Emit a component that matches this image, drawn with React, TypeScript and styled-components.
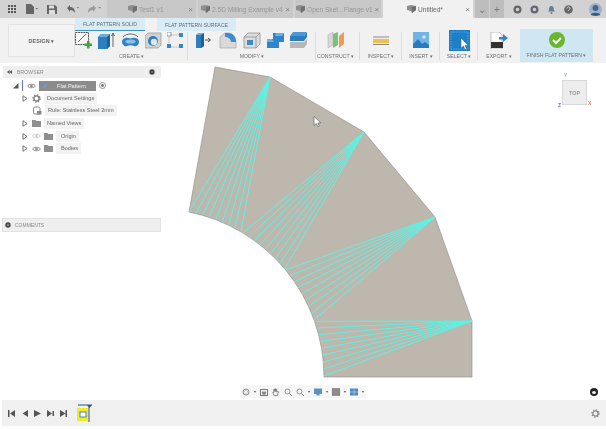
import React from "react";
import styled, { createGlobalStyle } from "styled-components";

const Global = createGlobalStyle`
  html, body { margin: 0; padding: 0; background: #fff; }
  body { font-family: "Liberation Sans", Arial, sans-serif; overflow: hidden; }
`;

const Page = styled.div`
  width: 606px; height: 429px; display: flex; flex-direction: column;
  overflow: hidden; background: #fff; filter: blur(0.42px); color: #666;
`;

/* ---------- title bar ---------- */
const TabBar = styled.div`
  height: 18px; flex: none; display: flex; align-items: center; background: #d2d2d2;
`;
const QuickTools = styled.div`
  width: 107px; flex: none; display: flex; align-items: center; gap: 9px; padding-left: 8px; box-sizing: border-box;
`;
const DocTab = styled.div<{ $w: number; $pad: number; $active?: boolean }>`
  width: ${p => p.$w}px; height: 18px; flex: none; margin-right: 2px; box-sizing: border-box;
  display: flex; align-items: center; gap: 2px; padding: 0 3px 0 ${p => p.$pad}px;
  background: ${p => (p.$active ? "#f1f1f1" : "#c8c8c8")};
  color: ${p => (p.$active ? "#666" : "#979797")}; font-size: 6.6px; white-space: nowrap;
`;
const TabClose = styled.span`
  font-size: 8px; color: #808080; margin-left: auto;
`;
const WindowTools = styled.div`
  display: flex; align-items: center; flex: 1; height: 18px;
`;
const WinSquare = styled.div`
  width: 14px; height: 18px; display: flex; align-items: center; justify-content: center;
  background: #bdbdbd; margin-right: 1px; color: #777; font-size: 10px;
`;
const WinIcons = styled.div`
  display: flex; align-items: center; gap: 8px; padding-left: 8px;
`;
const AvatarSlot = styled.div`
  margin-left: 8px; display: flex;
`;

/* ---------- ribbon ---------- */
const Ribbon = styled.div`
  height: 45px; flex: none; display: flex; background: #f1f1f1; padding-left: 8px; box-sizing: border-box; position: relative;
`;
const DesignButton = styled.div`
  width: 67px; height: 33px; margin-top: 6px; box-sizing: border-box; border: 1px solid #e2e2e2; background: #f3f3f3;
  display: flex; align-items: center; justify-content: center; font-size: 5.4px; font-weight: 700; color: #666; letter-spacing: .1px;
`;
const SubTabs = styled.div`
  height: 13px; display: flex; position: absolute; left: 75px; top: 0;
`;
const SubTab = styled.div<{ $w: number; $ml?: number; $active?: boolean }>`
  width: ${p => p.$w}px; margin-left: ${p => p.$ml || 0}px; height: 13px; box-sizing: border-box; background: #d9ecf6;
  border-bottom: ${p => (p.$active ? "1.5px solid #3c92c8" : "none")};
  display: flex; align-items: center; justify-content: center; font-size: 5.2px; color: #667; white-space: nowrap;
`;
const Groups = styled.div`
  flex: 1; display: flex; height: 45px; align-items: flex-start;
`;
const Group = styled.div<{ $w: number; $line?: boolean; $fill?: boolean; $pr?: number }>`
  width: ${p => p.$w}px; flex: none; display: flex; flex-direction: column; align-items: center; box-sizing: border-box;
  justify-content: flex-end; position: relative; background: ${p => (p.$fill ? "#cfe7f3" : "transparent")};
  margin-top: ${p => (p.$fill ? "11px" : 0)}; height: ${p => (p.$fill ? "33px" : "45px")};
  padding-right: ${p => p.$pr ?? 0}px;
  &::after {
    content: ""; display: ${p => (p.$line ? "block" : "none")}; position: absolute; right: 0; top: 14px; bottom: 3px; width: 1px; background: #dcdcdc;
  }
`;
const GroupIcons = styled.div<{ $gap?: number; $left?: number }>`
  display: flex; align-items: center; align-self: ${p => (p.$left === undefined ? "center" : "flex-start")};
  justify-content: center; gap: ${p => p.$gap ?? 5}px; height: 22px; padding-left: ${p => p.$left ?? 0}px;
`;
const GroupLabel = styled.div`
  font-size: 5.2px; color: #6e6e6e; height: 8px; line-height: 8px; margin-bottom: 3px; margin-top: 1px; white-space: nowrap;
`;

/* ---------- canvas ---------- */
const Canvas = styled.div`
  flex: none; height: 337px; position: relative; background: #fff;
`;
const Drawing = styled.svg`
  position: absolute; left: 0; top: 0; width: 606px; height: 337px;
`;
const BrowserPanel = styled.div`
  position: absolute; left: 3px; top: 3px; width: 158px;
`;
const PanelHeader = styled.div`
  height: 12px; background: #eeeeee; display: flex; align-items: center; padding: 0 4px; box-sizing: border-box;
  font-size: 5px; color: #8a8a8a; gap: 5px; letter-spacing: .15px;
`;
const HeaderEnd = styled.span`
  margin-left: auto; display: flex; padding-right: 2px;
`;
const Tree = styled.div`
  display: flex; flex-direction: column; margin-top: 1.5px;
`;
const TreeRow = styled.div<{ $indent: number }>`
  height: 12.6px; display: flex; align-items: center; gap: 3px; padding-left: ${p => p.$indent}px; font-size: 5.6px; color: #666; white-space: nowrap;
`;
const TreeLabel = styled.span<{ $pad?: number }>`
  background: #f2f2f2; height: 11px; line-height: 11px; padding: 0 3px 0 ${p => p.$pad ?? 3}px;
`;
const TriSlot = styled.span`
  display: flex; margin-right: 1px;
`;
const ActivePill = styled.div`
  width: 57px; height: 10px; background: #8b8b8b; color: #f5f5f5; font-size: 5.6px; display: flex; align-items: center; gap: 10px; padding-left: 3px; box-sizing: border-box;
`;
const ActiveBar = styled.span`
  width: 1px; height: 11px; background: #6a78c8; margin-right: 1px;
`;
const CommentsPanel = styled.div`
  position: absolute; left: 2px; top: 155px; width: 159px; height: 14px; box-sizing: border-box; background: #efefef; border: 1px solid #e2e2e2;
  display: flex; align-items: center; gap: 4px; padding-left: 2px; font-size: 5px; color: #8a8a8a;
`;
const ViewCube = styled.div`
  position: absolute; left: 562px; top: 17px; width: 25px; height: 25px; box-sizing: border-box; background: #ededed; border: 1px solid #d8d8d8;
  display: flex; align-items: center; justify-content: center; font-size: 5.5px; font-weight: 700; color: #9a9a9a;
`;
const Axis = styled.span<{ $c: string; $l: number; $t: number }>`
  position: absolute; left: ${p => p.$l}px; top: ${p => p.$t}px; font-size: 5px; color: ${p => p.$c};
`;
const NavBar = styled.div`
  position: absolute; left: 240px; top: 322px; height: 13px; display: flex; align-items: center; gap: 4px; background: #f6f6f6; padding: 0 2px;
`;
const Caret = styled.span`
  width: 0; height: 0; border-left: 1.5px solid transparent; border-right: 1.5px solid transparent; border-top: 2px solid #555;
`;
const CornerBadge = styled.div`
  position: absolute; left: 590px; top: 325px; width: 8px; height: 8px; border-radius: 50%; background: #222;
`;
const CornerDot = styled.div`
  width: 4px; height: 3px; margin: 2.5px 2px; background: #eee; border-radius: 50%;
`;

/* ---------- timeline ---------- */
const Timeline = styled.div`
  height: 26px; flex: none; margin-left: 2px; background: #f0f0f0; display: flex; align-items: center; padding: 0 6px; box-sizing: border-box; gap: 6px; position: relative;
`;
const TimelineGear = styled.div`
  margin-left: auto; display: flex;
`;
const FeatureIcon = styled.div`
  margin-left: 4px; display: flex;
`;

/* ---------- icons ---------- */
const Svg: React.FC<{ w: number; h?: number; vb?: string; children: React.ReactNode }> = ({ w, h, vb, children }) => (
  <svg width={w} height={h ?? w} viewBox={vb ?? `0 0 ${w} ${h ?? w}`} style={{ flex: "none", display: "block" }}>{children}</svg>
);
const GridIcon = () => (
  <Svg w={8}>{[0, 3, 6].flatMap(x => [0, 3, 6].map(y => <rect key={`${x}${y}`} x={x} y={y} width={2} height={2} fill="#555" />))}</Svg>
);
const DocIcon = () => (
  <Svg w={13} h={10}><path d="M1 0h5l3 3v7H1z" fill="#666" /><path d="M10.5 4l1.2 1.4L13 4z" fill="#666" /></Svg>
);
const SaveIcon = () => (
  <Svg w={10}><path d="M0 1h8l2 2v7H0z" fill="#666" /><rect x="2" y="1.5" width="5" height="3" fill="#ddd" /><rect x="2" y="6" width="6" height="4" fill="#ddd" /></Svg>
);
const UndoIcon: React.FC<{ c?: string; flip?: boolean }> = ({ c = "#666", flip }) => (
  <Svg w={13} h={8}>
    <g transform={flip ? "translate(9,0) scale(-1,1)" : ""}>
      <path d="M1 3l3-3v2c3 0 5 2 5 6-1-2-3-3-5-3v2z" fill={c} />
    </g>
    <path d="M10.5 2l1.2 1.4L13 2z" fill="#777" />
  </Svg>
);
const TabDoc = () => (
  <Svg w={9} h={8}><path d="M0 1l4-1 5 1v4l-4 3-1-2-4-1z" fill="#8d8d8d" /><path d="M5 2l4-1v4l-4 3z" fill="#6f6f6f" /></Svg>
);
const Round: React.FC<{ c?: string; inner?: string; size?: number }> = ({ c = "#666", inner = "#ccc", size = 9 }) => (
  <svg width={size} height={size} viewBox="0 0 9 9" style={{ flex: "none", display: "block" }}>
    <circle cx="4.5" cy="4.5" r="4" fill={c} /><circle cx="4.5" cy="4.5" r="1.8" fill={inner} />
  </svg>
);
const Bell = () => (
  <Svg w={9}><path d="M4.5 1c2 0 2.4 2 2.4 4l1 1.5H1l1-1.5c0-2 .5-4 2.5-4z" fill="#5f7f9a" /><circle cx="4.5" cy="8" r="1" fill="#c55" /></Svg>
);
const Help = () => (
  <Svg w={9}><circle cx="4.5" cy="4.5" r="4.3" fill="#666" /><path d="M3 3.5c0-2 3-2 3 0 0 1-1.500 1-1.500 2.200" stroke="#ddd" strokeWidth="1" fill="none" /></Svg>
);
const Avatar = () => (
  <Svg w={13}><circle cx="6.5" cy="6.5" r="6.5" fill="#9db3cc" /><circle cx="6.5" cy="5" r="3" fill="#4d6585" /><path d="M1.5 12c1-3 9-3 10 0l-5 1z" fill="#3f5877" /></Svg>
);

const SketchIcon = () => (
  <Svg w={18} h={17}>
    <rect x=".5" y=".5" width="13" height="12" fill="#f7f7f7" stroke="#555" strokeDasharray="2 .6" />
    <path d="M3 10L11 2" stroke="#666" />
    <path d="M12 9h2.500v2.500H17V14h-2.500v2.500H12V14H9.500v-2.500H12z" fill="#3aa83a" />
  </Svg>
);
const ExtrudeIcon = () => (
  <Svg w={18} h={17}>
    <path d="M0 5l3-3h9v12l-3 3H0z" fill="#2f7fc0" /><path d="M9 5l3-3v12l-3 3z" fill="#1f5f98" /><path d="M0 5l3-3h9L9 5z" fill="#69abdc" />
    <path d="M15 15V2M13.500 4L15 1l1.500 3" stroke="#444" strokeWidth=".8" fill="none" />
  </Svg>
);
const RevolveIcon = () => (
  <Svg w={19} h={17}>
    <path d="M1 10c0-4 5-5 8.500-3.500C13 5 18 6 18 10c0 3-3 5-5 4-2-1-5-1-7 0s-5-1-5-4z" fill="#3283c4" />
    <ellipse cx="9.500" cy="9.500" rx="5" ry="2" fill="#8ec0e6" />
    <path d="M2 5c3-4 12-4 15 0" stroke="#444" strokeWidth=".8" fill="none" />
  </Svg>
);
const HoleIcon = () => (
  <Svg w={17}>
    <path d="M0 4l3-3h13v12l-3 3H0z" fill="#d2d2d2" stroke="#888" strokeWidth=".6" />
    <circle cx="8" cy="9" r="5" fill="#2f7fc0" /><circle cx="9" cy="10" r="3.200" fill="#e4e4e4" />
  </Svg>
);
const PatternIcon = () => (
  <Svg w={17}>
    <path d="M4 3h9M2 5v8M4 15h9" stroke="#888" strokeWidth=".6" strokeDasharray="1.500 .8" />
    <rect x="0" y="0" width="4" height="4" fill="#fff" stroke="#777" strokeWidth=".7" />
    <rect x="12" y="1" width="4" height="4" fill="#3b87c4" /><rect x="12" y="12" width="4" height="4" fill="#3b87c4" /><rect x="0" y="12" width="4" height="4" fill="#3b87c4" />
  </Svg>
);
const PressPull = () => (
  <Svg w={17}>
    <path d="M1 3l3-2h5v13l-3 2H1z" fill="#2f7fc0" /><path d="M6 3l3-2v13l-3 2z" fill="#1f5f98" /><path d="M1 3l3-2h5L6 3z" fill="#6eaede" />
    <path d="M10 8h5M13 6l2.500 2L13 10" stroke="#444" strokeWidth=".9" fill="none" />
  </Svg>
);
const FilletIcon = () => (
  <Svg w={19} h={17}>
    <path d="M2 16V5l5-4h3c5 0 8 4 8 9v6z" fill="#d9d9d9" stroke="#999" strokeWidth=".6" />
    <path d="M7 1h3c5 0 8 4 8 9h-5c0-3-3-5-6-5z" fill="#3a8ccb" />
  </Svg>
);
const ShellIcon = () => (
  <Svg w={18} h={17}>
    <path d="M1 5l4-4h12v11l-4 4H1z" fill="#dcdcdc" stroke="#888" strokeWidth=".7" />
    <path d="M1 5h12v11M13 5l4-4" stroke="#888" strokeWidth=".7" fill="none" />
    <rect x="4" y="8" width="6" height="5" fill="#3a8ccb" />
  </Svg>
);
const CombineIcon = () => (
  <Svg w={17}>
    <path d="M6 1h11v9h-5v6H0V7h6z" fill="#2e85cb" /><path d="M9 1h8l-2 3H8z" fill="#6db1e4" /><path d="M0 7h5l2 3H0z" fill="#6db1e4" />
  </Svg>
);
const StackIcon = () => (
  <Svg w={17}>
    <path d="M3 0h14l-3 4H0z" fill="#4d97d6" /><path d="M0 4h14l3-4v5l-3 4H0z" fill="#2c7dc0" />
    <path d="M0 10h14l3-3v5l-3 4H0z" fill="#b7b7b7" />
  </Svg>
);
const ConstructIcon = () => (
  <Svg w={18}>
    <path d="M1 4l5-3v13l-5 3z" fill="#d8d8d8" stroke="#aaa" strokeWidth=".5" />
    <path d="M6 3l5-2v13l-5 3z" fill="#79c27c" />
    <path d="M12 5l5-4v12l-5 4z" fill="#ee9a58" />
  </Svg>
);
const InspectIcon = () => (
  <Svg w={16} h={10}>
    <path d="M0 2h16" stroke="#888" strokeWidth="1" />
    <rect x="0" y="4" width="16" height="4" fill="#f0c04c" />
    <path d="M0 9.500h16" stroke="#888" strokeWidth="1" />
  </Svg>
);
const InsertIcon = () => (
  <Svg w={16}>
    <rect width="16" height="16" fill="#6fb4e6" />
    <path d="M0 16v-4l5-5 4 5 3-2 4 3v3z" fill="#2a7bbd" />
    <circle cx="11" cy="5" r="1.800" fill="#cfe7f7" />
  </Svg>
);
const SelectIcon = () => (
  <Svg w={21}>
    <rect width="21" height="21" fill="#1d7fc7" />
    <rect x="2" y="2" width="17" height="17" fill="none" stroke="#7fbde8" strokeWidth=".6" strokeDasharray="1.500 1" />
    <path d="M12 8v10l2.500-2 1.500 3.500 1.500-.8-1.500-3.300 3-.2z" fill="#fff" stroke="#444" strokeWidth=".4" />
  </Svg>
);
const ExportIcon = () => (
  <Svg w={18} h={17}>
    <path d="M1 0h8l3 3v14H1z" fill="#fdfdfd" stroke="#999" strokeWidth=".6" />
    <rect x="1" y="10" width="12" height="6" fill="#333" />
    <path d="M9 5h4V2l5 4-5 4V7.500H9z" fill="#2f86cc" />
  </Svg>
);
const FinishIcon = () => (
  <Svg w={16}>
    <circle cx="8" cy="8" r="8" fill="#68b72c" />
    <path d="M4 8l3 3 5-5" stroke="#fff" strokeWidth="2" fill="none" />
  </Svg>
);
const Tri = () => (
  <Svg w={6} h={7}><path d="M1 .7L5 3.500 1 6.300z" fill="#fff" stroke="#555" strokeWidth=".8" /></Svg>
);
const Eye: React.FC<{ faded?: boolean }> = ({ faded }) => (
  <Svg w={9} h={6}>
    <path d="M.5 3C2 .7 7 .7 8.500 3 7 5.300 2 5.300.5 3z" fill="none" stroke={faded ? "#ccc" : "#888"} />
    <circle cx="4.500" cy="3" r="1.300" fill={faded ? "#ccc" : "#888"} />
  </Svg>
);
const Folder = () => (
  <Svg w={9} h={7}><path d="M0 0h3.500l1 1H9v6H0z" fill="#8f8f8f" /></Svg>
);
const Gear: React.FC<{ c?: string }> = ({ c = "#777" }) => (
  <Svg w={9}>
    <circle cx="4.500" cy="4.500" r="2.600" fill="none" stroke={c} strokeWidth="1.300" />
    <circle cx="4.500" cy="4.500" r="3.700" fill="none" stroke={c} strokeWidth="1.200" strokeDasharray="1.300 1.600" />
  </Svg>
);
const RuleIcon = () => (
  <Svg w={9}><rect x=".5" y="1" width="6.500" height="7" fill="none" stroke="#888" rx="1.500" /><rect x="4" y="5" width="4.500" height="3.500" fill="#888" /></Svg>
);
const RootMark = () => (
  <Svg w={6}><path d="M0 5.500L5.500 0v5.500z" fill="#555" /></Svg>
);
const Radio = () => (
  <Svg w={7}><circle cx="3.500" cy="3.500" r="3" fill="#fff" stroke="#666" strokeWidth=".7" /><circle cx="3.500" cy="3.500" r="1.300" fill="#555" /></Svg>
);
const BackArrows = () => (
  <Svg w={5} h={4}><path d="M2.500 0L0 2l2.500 2zM5 0L2.500 2 5 4z" fill="#555" /></Svg>
);
const NavIcon: React.FC<{ kind: string }> = ({ kind }) => {
  const parts: Record<string, React.ReactNode> = {
    orbit: <><circle cx="4" cy="4" r="3" fill="none" stroke="#777" strokeWidth=".8" /><path d="M1 6l3-5 3 5z" fill="none" stroke="#999" strokeWidth=".6" /></>,
    cal: <><rect x=".5" y="1.500" width="7" height="6" fill="none" stroke="#777" /><rect x="2" y="3.500" width="4" height="3" fill="#888" /></>,
    hand: <path d="M2 7.500L.8 4.500l1 0V1.500h1v2V.8h1v2.700V1.300h1v3l1-1 .7.400-1 3.800z" fill="none" stroke="#666" strokeWidth=".7" />,
    zoom: <><circle cx="3.500" cy="3.500" r="2.500" fill="none" stroke="#777" strokeWidth=".8" /><path d="M5.500 5.500L8 8" stroke="#777" /></>,
    display: <><rect y=".5" width="8" height="5.500" fill="#5d8fc0" /><rect x="2.500" y="6" width="3" height="1.500" fill="#5d8fc0" /></>,
    grid: <rect y=".5" width="8" height="7" fill="#8d8d8d" stroke="#666" strokeWidth=".5" />,
    view: <><rect y=".5" width="8" height="7" fill="#4f88c0" /><path d="M4 .5v7M0 4h8" stroke="#cfe0f0" strokeWidth=".6" /></>,
  };
  return <Svg w={8}>{parts[kind]}</Svg>;
};
const Transport: React.FC<{ d: string }> = ({ d }) => <Svg w={7}><path d={d} fill="#555" /></Svg>;

/* ---------- flat pattern ---------- */
const cx = 155.7, cy = 314, r = 168.3;
const fans: { apex: [number, number]; from: number; to: number }[] = [
  { apex: [270, 14], from: 78.6, to: 59.6 },
  { apex: [364, 69], from: 58.8, to: 40 },
  { apex: [435, 154], from: 39.5, to: 19.8 },
  { apex: [472, 258], from: 19.3, to: 0.4 },
];
const arcPt = (deg: number): [number, number] => {
  const a = (deg * Math.PI) / 180;
  return [cx + r * Math.cos(a), cy - r * Math.sin(a)];
};

const FlatPattern = () => (
  <Drawing viewBox="0 0 606 337">
    <path
      d={`M215 4L270 14L364 69L435 154L472 258V314H324A${r} ${r} 0 0 0 189 149Z`}
      fill="#bdb7ad" stroke="#8f8c86" strokeWidth=".6"
    />
    {fans.map((f, i) =>
      Array.from({ length: 9 }, (_, k) => {
        const [x, y] = arcPt(f.from + ((f.to - f.from) * k) / 8);
        return <line key={`${i}-${k}`} x1={f.apex[0]} y1={f.apex[1]} x2={x} y2={y} stroke="#5cf3e5" strokeWidth="1" />;
      })
    )}
    <path d="M316 5.500l0 9 2.300-2 1.600 3.200 1.400-.7-1.500-3 3-.2z" transform="translate(-2,48)" fill="#fff" stroke="#666" strokeWidth=".7" />
  </Drawing>
);

const navKinds = ["orbit", "cal", "hand", "zoom", "zoom", "display", "grid", "view"];
const caretAfter = new Set([0, 4, 5, 6, 7]);

export default function App() {
  return (
    <>
      <Global />
      <Page>
        <TabBar>
          <QuickTools>
            <GridIcon /><DocIcon /><SaveIcon /><UndoIcon /><UndoIcon c="#999" flip />
          </QuickTools>
          <DocTab $w={89} $pad={21}><TabDoc /><span>Test1 v1</span><TabClose>×</TabClose></DocTab>
          <DocTab $w={95} $pad={3}><TabDoc /><span>2.5D Milling Example v4</span><TabClose>×</TabClose></DocTab>
          <DocTab $w={86} $pad={1}><TabDoc /><span>Open Sket...Flange v1</span><TabClose>×</TabClose></DocTab>
          <DocTab $w={90} $pad={24} $active><TabDoc /><span>Untitled*</span><TabClose>×</TabClose></DocTab>
          <WindowTools>
            <WinSquare>⌄</WinSquare><WinSquare>+</WinSquare>
            <WinIcons><Round /><Round c="#667" /><Bell /><Help /><AvatarSlot><Avatar /></AvatarSlot></WinIcons>
          </WindowTools>
        </TabBar>

        <Ribbon>
          <DesignButton>DESIGN ▾</DesignButton>
          <SubTabs>
            <SubTab $w={70} $active>FLAT PATTERN SOLID</SubTab>
            <SubTab $w={79} $ml={12}>FLAT PATTERN SURFACE</SubTab>
          </SubTabs>
          <Groups>
            <Group $w={113} $line>
              <GroupIcons $left={0} $gap={5}><SketchIcon /><ExtrudeIcon /><RevolveIcon /><HoleIcon /><PatternIcon /></GroupIcons>
              <GroupLabel>CREATE ▾</GroupLabel>
            </Group>
            <Group $w={128} $line>
              <GroupIcons $left={7} $gap={6}><PressPull /><FilletIcon /><ShellIcon /><CombineIcon /><StackIcon /></GroupIcons>
              <GroupLabel>MODIFY ▾</GroupLabel>
            </Group>
            <Group $w={44} $line $pr={5}>
              <GroupIcons><ConstructIcon /></GroupIcons>
              <GroupLabel>CONSTRUCT ▾</GroupLabel>
            </Group>
            <Group $w={42} $line>
              <GroupIcons><InspectIcon /></GroupIcons>
              <GroupLabel>INSPECT ▾</GroupLabel>
            </Group>
            <Group $w={38} $line>
              <GroupIcons><InsertIcon /></GroupIcons>
              <GroupLabel>INSERT ▾</GroupLabel>
            </Group>
            <Group $w={38} $line>
              <GroupIcons><SelectIcon /></GroupIcons>
              <GroupLabel>SELECT ▾</GroupLabel>
            </Group>
            <Group $w={42}>
              <GroupIcons><ExportIcon /></GroupIcons>
              <GroupLabel>EXPORT ▾</GroupLabel>
            </Group>
            <Group $w={73} $fill>
              <GroupIcons><FinishIcon /></GroupIcons>
              <GroupLabel>FINISH FLAT PATTERN ▾</GroupLabel>
            </Group>
          </Groups>
        </Ribbon>

        <Canvas>
          <FlatPattern />
          <BrowserPanel>
            <PanelHeader><BackArrows />BROWSER<HeaderEnd><Round c="#444" inner="#666" size={6} /></HeaderEnd></PanelHeader>
            <Tree>
              <TreeRow $indent={10}>
                <RootMark /><ActiveBar /><Eye />
                <ActivePill><Svg w={5}><path d="M0 5l3-4 2 1-3 4z" fill="#5da2dc" /></Svg>Flat Pattern</ActivePill>
                <Radio />
              </TreeRow>
              <TreeRow $indent={19}><TriSlot><Tri /></TriSlot><Gear /><TreeLabel>Document Settings</TreeLabel></TreeRow>
              <TreeRow $indent={30}><RuleIcon /><TreeLabel>Rule: Stainless Steel 2mm</TreeLabel></TreeRow>
              <TreeRow $indent={19}><TriSlot><Tri /></TriSlot><Folder /><TreeLabel>Named Views</TreeLabel></TreeRow>
              <TreeRow $indent={19}><TriSlot><Tri /></TriSlot><Eye faded /><Folder /><TreeLabel $pad={5}>Origin</TreeLabel></TreeRow>
              <TreeRow $indent={19}><TriSlot><Tri /></TriSlot><Eye /><Folder /><TreeLabel $pad={5}>Bodies</TreeLabel></TreeRow>
            </Tree>
          </BrowserPanel>
          <CommentsPanel><Round c="#444" inner="#888" size={6} />COMMENTS</CommentsPanel>
          <ViewCube>
            TOP
            <Axis $c="#7ac47a" $l={1} $t={-9}>Y</Axis>
            <Axis $c="#e57b7b" $l={25} $t={19}>X</Axis>
            <Axis $c="#6f6fe0" $l={-5} $t={21}>Z</Axis>
          </ViewCube>
          <NavBar>
            {navKinds.map((k, i) => (
              <React.Fragment key={i}>
                <NavIcon kind={k} />
                {caretAfter.has(i) && <Caret />}
              </React.Fragment>
            ))}
          </NavBar>
          <CornerBadge><CornerDot /></CornerBadge>
        </Canvas>

        <Timeline>
          <Transport d="M0 0h1.500v7H0zM7 0v7L2 3.500z" />
          <Transport d="M7 0v7L1.500 3.500z" />
          <Transport d="M0 0v7l7-3.500z" />
          <Transport d="M0 0v7l5-3.500zM5.500 1h1.500v5H5.500z" />
          <Transport d="M0 0v7l5.500-3.500zM5.500 0H7v7H5.500z" />
          <FeatureIcon>
            <Svg w={16} h={18}>
              <rect x="0" y="4" width="11" height="13" fill="#ecec2e" />
              <rect x="3" y="8" width="6" height="5" fill="#fff" stroke="#4f83b8" />
              <path d="M1 1h14" stroke="#4f83b8" strokeWidth="1.400" />
              <path d="M12 1v17" stroke="#666" strokeWidth="1.200" />
              <path d="M10 1h5l-2.500 3z" fill="#555" />
            </Svg>
          </FeatureIcon>
          <TimelineGear><Gear c="#888" /></TimelineGear>
        </Timeline>
      </Page>
    </>
  );
}
